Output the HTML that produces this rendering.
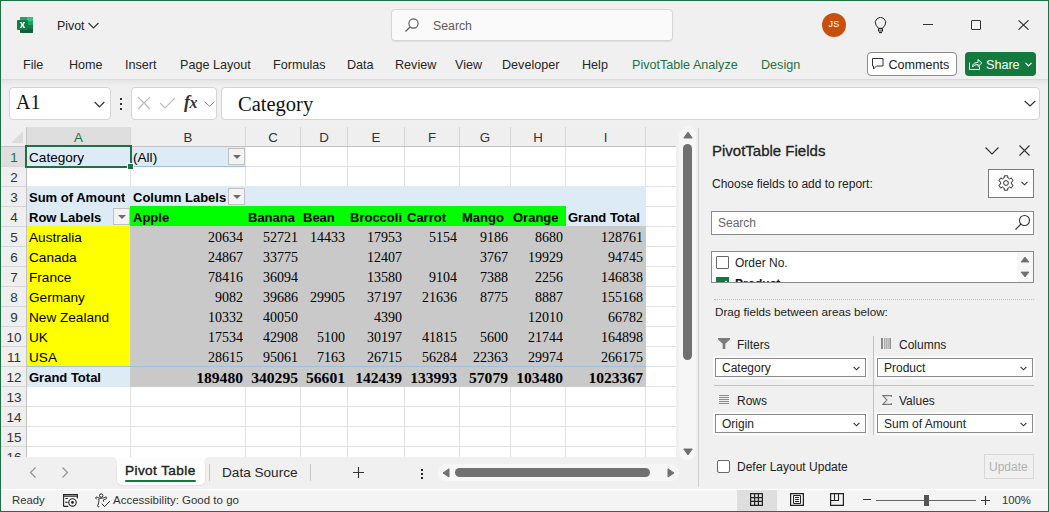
<!DOCTYPE html><html><head><meta charset="utf-8"><style>
*{margin:0;padding:0;box-sizing:border-box}
html,body{width:1049px;height:512px;overflow:hidden;background:#f0f0f0;font-family:"Liberation Sans",sans-serif;color:#222}
.a{position:absolute}
.ui{font-size:13px;color:#262626;white-space:nowrap}
.cell{position:absolute;white-space:nowrap;overflow:hidden;font-size:14px;line-height:20px}
.num{font-family:"Liberation Serif",serif;text-align:right;font-size:15px}
</style></head><body>
<div class="a" style="left:0;top:0;width:1049px;height:512px;border:1px solid #1e7145;z-index:10"></div>
<svg class="a" style="left:17px;top:17px" width="16" height="16" viewBox="0 0 16 16">
<path d="M3 1 Q3 0 4 0 H15 Q16 0 16 1 V15 Q16 16 15 16 H4 Q3 16 3 15Z" fill="#107c41"/>
<path d="M3 1 Q3 0 4 0 H15 Q16 0 16 1 V4 H3Z" fill="#21a366"/>
<path d="M10 0 H15 Q16 0 16 1 V4 H10Z" fill="#33c481"/>
<rect x="10" y="4" width="6" height="4" fill="#21a366"/>
<path d="M3 12 H16 V15 Q16 16 15 16 H4 Q3 16 3 15Z" fill="#185c37"/>
<rect x="0" y="3" width="11" height="10" rx="1" fill="#107c41"/>
<path d="M2.8 5 L4.6 5 L5.5 6.9 L6.4 5 L8.2 5 L6.5 8 L8.3 11 L6.5 11 L5.5 9.1 L4.5 11 L2.7 11 L4.5 8Z" fill="#fff"/>
</svg>
<div class="a ui" style="left:57px;top:19px;font-size:12.4px;color:#222">Pivot</div>
<svg class="a" style="left:88px;top:22px" width="11" height="7" viewBox="0 0 11 7"><path d="M0.5 1 L5.5 6 L10.5 1" fill="none" stroke="#333" stroke-width="1.1"/></svg>
<div class="a" style="left:391px;top:9px;width:282px;height:32px;background:#fafafa;border:1px solid #d6d6d6;border-radius:4px;box-shadow:0 1px 1px rgba(0,0,0,0.08)"></div>
<svg class="a" style="left:404px;top:17px" width="16" height="16" viewBox="0 0 16 16"><circle cx="9.5" cy="6.5" r="4.6" fill="none" stroke="#555" stroke-width="1.1"/><path d="M6.2 9.8 L1.5 14.5" stroke="#555" stroke-width="1.2"/></svg>
<div class="a ui" style="left:433px;top:18.7px;color:#5a5a5a;font-size:12.3px">Search</div>
<div class="a" style="left:822px;top:13px;width:24px;height:24px;border-radius:50%;background:#c94f0f;color:#fff;font-size:9px;line-height:23px;text-align:center;letter-spacing:0.3px">JS</div>
<svg class="a" style="left:873px;top:17px" width="15" height="18" viewBox="0 0 15 18"><path d="M5.5 11.3 L3 8.2 A5.2 5.2 0 1 1 12 8.2 L9.5 11.3 Z" fill="none" stroke="#222" stroke-width="1"/><rect x="5.5" y="11.8" width="4" height="2.2" fill="none" stroke="#222" stroke-width="1"/><path d="M6 15.6 H9" stroke="#222" stroke-width="1.1"/></svg>
<div class="a" style="left:923px;top:24px;width:10px;height:1px;background:#333"></div>
<div class="a" style="left:971px;top:20px;width:10px;height:10px;border:1px solid #333;border-radius:1px"></div>
<svg class="a" style="left:1018px;top:20px" width="11" height="10" viewBox="0 0 11 10"><path d="M0.5 0.3 L10.5 9.7 M10.5 0.3 L0.5 9.7" stroke="#333" stroke-width="1.1"/></svg>
<div class="a ui" style="left:23px;top:57.7px;font-size:12.6px;color:#262626">File</div>
<div class="a ui" style="left:69px;top:57.7px;font-size:12.6px;color:#262626">Home</div>
<div class="a ui" style="left:125px;top:57.7px;font-size:12.6px;color:#262626">Insert</div>
<div class="a ui" style="left:180px;top:57.7px;font-size:12.6px;color:#262626">Page Layout</div>
<div class="a ui" style="left:273px;top:57.7px;font-size:12.6px;color:#262626">Formulas</div>
<div class="a ui" style="left:347px;top:57.7px;font-size:12.6px;color:#262626">Data</div>
<div class="a ui" style="left:395px;top:57.7px;font-size:12.6px;color:#262626">Review</div>
<div class="a ui" style="left:455px;top:57.7px;font-size:12.6px;color:#262626">View</div>
<div class="a ui" style="left:502px;top:57.7px;font-size:12.6px;color:#262626">Developer</div>
<div class="a ui" style="left:582px;top:57.7px;font-size:12.6px;color:#262626">Help</div>
<div class="a ui" style="left:632px;top:57.7px;font-size:12.6px;color:#1e7145">PivotTable Analyze</div>
<div class="a ui" style="left:761px;top:57.7px;font-size:12.6px;color:#1e7145">Design</div>
<div class="a" style="left:867px;top:52px;width:90px;height:24px;border:1px solid #8a8a8a;border-radius:4px;background:#fdfdfd"></div>
<svg class="a" style="left:872px;top:58px" width="12" height="12" viewBox="0 0 12 12"><path d="M0.5 0.5 H11 V8 H4.5 L1.5 11 V8 H0.5 Z" fill="none" stroke="#333" stroke-width="1"/></svg>
<div class="a ui" style="left:888.5px;top:57.7px;font-size:12.6px;color:#222">Comments</div>
<div class="a" style="left:965px;top:52px;width:71px;height:24px;border-radius:4px;background:#117a3c"></div>
<svg class="a" style="left:969px;top:58px" width="14" height="12" viewBox="0 0 14 12"><path d="M0.5 4.5 V11.5 H10.5 V8.5" fill="none" stroke="#fff" stroke-width="1"/><path d="M3.5 9 C3.5 5.5 6 4.5 9 4.5 V1.5 L12.8 5 L9 8.5 V6.5 C6.5 6.5 4.8 7.3 3.5 9Z" fill="none" stroke="#fff" stroke-width="1"/></svg>
<div class="a ui" style="left:986px;top:57.7px;font-size:12.6px;color:#fff">Share</div>
<svg class="a" style="left:1025px;top:62px" width="7" height="5" viewBox="0 0 7 5"><path d="M0.5 0.8 L3.5 3.8 L6.5 0.8" fill="none" stroke="#fff" stroke-width="1.2"/></svg>
<div class="a" style="left:1px;top:79px;width:1048px;height:1px;background:#d9d9d9"></div>
<div class="a" style="left:1px;top:80px;width:1048px;height:6px;background:linear-gradient(#e4e4e4,#f0f0f0)"></div>
<div class="a" style="left:9px;top:87px;width:102px;height:33px;background:#fff;border:1px solid #d4d4d4;border-radius:4px"></div>
<div class="a" style="left:16px;top:91px;font-family:'Liberation Serif',serif;font-size:20px;color:#111">A1</div>
<svg class="a" style="left:94px;top:101px" width="11" height="7" viewBox="0 0 11 7"><path d="M0.7 1 L5.5 5.8 L10.3 1" fill="none" stroke="#333" stroke-width="1.2"/></svg>
<div class="a" style="left:120px;top:98px;width:2px;height:2px;background:#333"></div>
<div class="a" style="left:120px;top:103px;width:2px;height:2px;background:#333"></div>
<div class="a" style="left:120px;top:108px;width:2px;height:2px;background:#333"></div>
<div class="a" style="left:131px;top:87px;width:86px;height:33px;background:#fff;border:1px solid #d4d4d4;border-radius:4px"></div>
<svg class="a" style="left:137px;top:96px" width="14" height="14" viewBox="0 0 14 14"><path d="M1 1 L13 13 M13 1 L1 13" stroke="#bbb" stroke-width="1.1"/></svg>
<svg class="a" style="left:159px;top:97px" width="17" height="12" viewBox="0 0 17 12"><path d="M1 6 L6 11 L16 1" fill="none" stroke="#bbb" stroke-width="1.1"/></svg>
<div class="a" style="left:184px;top:92px;font-family:'Liberation Serif',serif;font-style:italic;font-weight:bold;font-size:18px;color:#333;letter-spacing:-0.5px">f<span style="font-size:16px">x</span></div>
<svg class="a" style="left:204px;top:101px" width="11" height="6" viewBox="0 0 11 6"><path d="M0.5 0.8 L5.5 5.2 L10.5 0.8" fill="none" stroke="#888" stroke-width="1"/></svg>
<div class="a" style="left:221px;top:87px;width:819px;height:33px;background:#fff;border:1px solid #d4d4d4;border-radius:4px"></div>
<div class="a" style="left:238px;top:93px;font-family:'Liberation Serif',serif;font-size:20.5px;color:#111">Category</div>
<svg class="a" style="left:1024px;top:100px" width="12" height="7" viewBox="0 0 12 7"><path d="M0.7 1 L6 6 L11.3 1" fill="none" stroke="#333" stroke-width="1.2"/></svg>
<div class="a" style="left:1px;top:127px;width:675px;height:330px;background:#fff"></div>
<div class="a" style="left:1px;top:127px;width:675px;height:19px;background:#efefef"></div>
<div class="a" style="left:1px;top:146px;width:675px;height:1px;background:#c3c3c3;z-index:2"></div>
<div class="a" style="left:1px;top:127px;width:25px;height:330px;background:#efefef"></div>
<div class="a" style="left:26px;top:127px;width:1px;height:330px;background:#c3c3c3"></div>
<div class="a" style="left:27px;top:127px;width:103px;height:19px;background:#dedede"></div>
<div class="a" style="left:1px;top:147px;width:25px;height:19px;background:#dedede"></div>
<svg class="a" style="left:11px;top:131px" width="12" height="12" viewBox="0 0 12 12"><path d="M12 0 V12 H0 Z" fill="#dcdcdc"/></svg>
<div class="a" style="left:27px;top:128px;width:103px;height:19px;line-height:20px;text-align:center;font-size:13.3px;color:#1e7145">A</div>
<div class="a" style="left:131px;top:128px;width:114px;height:19px;line-height:20px;text-align:center;font-size:13.3px;color:#333">B</div>
<div class="a" style="left:246px;top:128px;width:54px;height:19px;line-height:20px;text-align:center;font-size:13.3px;color:#333">C</div>
<div class="a" style="left:301px;top:128px;width:46px;height:19px;line-height:20px;text-align:center;font-size:13.3px;color:#333">D</div>
<div class="a" style="left:348px;top:128px;width:56px;height:19px;line-height:20px;text-align:center;font-size:13.3px;color:#333">E</div>
<div class="a" style="left:405px;top:128px;width:54px;height:19px;line-height:20px;text-align:center;font-size:13.3px;color:#333">F</div>
<div class="a" style="left:460px;top:128px;width:50px;height:19px;line-height:20px;text-align:center;font-size:13.3px;color:#333">G</div>
<div class="a" style="left:511px;top:128px;width:54px;height:19px;line-height:20px;text-align:center;font-size:13.3px;color:#333">H</div>
<div class="a" style="left:566px;top:128px;width:79px;height:19px;line-height:20px;text-align:center;font-size:13.3px;color:#333">I</div>
<div class="a" style="left:130px;top:127px;width:1px;height:19px;background:#d6d6d6"></div>
<div class="a" style="left:130px;top:147px;width:1px;height:310px;background:#e1e1e1"></div>
<div class="a" style="left:245px;top:127px;width:1px;height:19px;background:#d6d6d6"></div>
<div class="a" style="left:245px;top:147px;width:1px;height:310px;background:#e1e1e1"></div>
<div class="a" style="left:300px;top:127px;width:1px;height:19px;background:#d6d6d6"></div>
<div class="a" style="left:300px;top:147px;width:1px;height:310px;background:#e1e1e1"></div>
<div class="a" style="left:347px;top:127px;width:1px;height:19px;background:#d6d6d6"></div>
<div class="a" style="left:347px;top:147px;width:1px;height:310px;background:#e1e1e1"></div>
<div class="a" style="left:404px;top:127px;width:1px;height:19px;background:#d6d6d6"></div>
<div class="a" style="left:404px;top:147px;width:1px;height:310px;background:#e1e1e1"></div>
<div class="a" style="left:459px;top:127px;width:1px;height:19px;background:#d6d6d6"></div>
<div class="a" style="left:459px;top:147px;width:1px;height:310px;background:#e1e1e1"></div>
<div class="a" style="left:510px;top:127px;width:1px;height:19px;background:#d6d6d6"></div>
<div class="a" style="left:510px;top:147px;width:1px;height:310px;background:#e1e1e1"></div>
<div class="a" style="left:565px;top:127px;width:1px;height:19px;background:#d6d6d6"></div>
<div class="a" style="left:565px;top:147px;width:1px;height:310px;background:#e1e1e1"></div>
<div class="a" style="left:645px;top:127px;width:1px;height:19px;background:#d6d6d6"></div>
<div class="a" style="left:645px;top:147px;width:1px;height:310px;background:#e1e1e1"></div>
<div class="a" style="left:27px;top:166px;width:649px;height:1px;background:#e1e1e1"></div>
<div class="a" style="left:1px;top:166px;width:25px;height:1px;background:#d6d6d6"></div>
<div class="a" style="left:1.5px;top:148px;width:25px;height:19px;line-height:20px;text-align:center;font-size:13.5px;color:#1e7145">1</div>
<div class="a" style="left:27px;top:186px;width:649px;height:1px;background:#e1e1e1"></div>
<div class="a" style="left:1px;top:186px;width:25px;height:1px;background:#d6d6d6"></div>
<div class="a" style="left:1.5px;top:168px;width:25px;height:19px;line-height:20px;text-align:center;font-size:13.5px;color:#333">2</div>
<div class="a" style="left:27px;top:206px;width:649px;height:1px;background:#e1e1e1"></div>
<div class="a" style="left:1px;top:206px;width:25px;height:1px;background:#d6d6d6"></div>
<div class="a" style="left:1.5px;top:188px;width:25px;height:19px;line-height:20px;text-align:center;font-size:13.5px;color:#333">3</div>
<div class="a" style="left:27px;top:226px;width:649px;height:1px;background:#e1e1e1"></div>
<div class="a" style="left:1px;top:226px;width:25px;height:1px;background:#d6d6d6"></div>
<div class="a" style="left:1.5px;top:208px;width:25px;height:19px;line-height:20px;text-align:center;font-size:13.5px;color:#333">4</div>
<div class="a" style="left:27px;top:246px;width:649px;height:1px;background:#e1e1e1"></div>
<div class="a" style="left:1px;top:246px;width:25px;height:1px;background:#d6d6d6"></div>
<div class="a" style="left:1.5px;top:228px;width:25px;height:19px;line-height:20px;text-align:center;font-size:13.5px;color:#333">5</div>
<div class="a" style="left:27px;top:266px;width:649px;height:1px;background:#e1e1e1"></div>
<div class="a" style="left:1px;top:266px;width:25px;height:1px;background:#d6d6d6"></div>
<div class="a" style="left:1.5px;top:248px;width:25px;height:19px;line-height:20px;text-align:center;font-size:13.5px;color:#333">6</div>
<div class="a" style="left:27px;top:286px;width:649px;height:1px;background:#e1e1e1"></div>
<div class="a" style="left:1px;top:286px;width:25px;height:1px;background:#d6d6d6"></div>
<div class="a" style="left:1.5px;top:268px;width:25px;height:19px;line-height:20px;text-align:center;font-size:13.5px;color:#333">7</div>
<div class="a" style="left:27px;top:306px;width:649px;height:1px;background:#e1e1e1"></div>
<div class="a" style="left:1px;top:306px;width:25px;height:1px;background:#d6d6d6"></div>
<div class="a" style="left:1.5px;top:288px;width:25px;height:19px;line-height:20px;text-align:center;font-size:13.5px;color:#333">8</div>
<div class="a" style="left:27px;top:326px;width:649px;height:1px;background:#e1e1e1"></div>
<div class="a" style="left:1px;top:326px;width:25px;height:1px;background:#d6d6d6"></div>
<div class="a" style="left:1.5px;top:308px;width:25px;height:19px;line-height:20px;text-align:center;font-size:13.5px;color:#333">9</div>
<div class="a" style="left:27px;top:346px;width:649px;height:1px;background:#e1e1e1"></div>
<div class="a" style="left:1px;top:346px;width:25px;height:1px;background:#d6d6d6"></div>
<div class="a" style="left:1.5px;top:328px;width:25px;height:19px;line-height:20px;text-align:center;font-size:13.5px;color:#333">10</div>
<div class="a" style="left:27px;top:366px;width:649px;height:1px;background:#e1e1e1"></div>
<div class="a" style="left:1px;top:366px;width:25px;height:1px;background:#d6d6d6"></div>
<div class="a" style="left:1.5px;top:348px;width:25px;height:19px;line-height:20px;text-align:center;font-size:13.5px;color:#333">11</div>
<div class="a" style="left:27px;top:386px;width:649px;height:1px;background:#e1e1e1"></div>
<div class="a" style="left:1px;top:386px;width:25px;height:1px;background:#d6d6d6"></div>
<div class="a" style="left:1.5px;top:368px;width:25px;height:19px;line-height:20px;text-align:center;font-size:13.5px;color:#333">12</div>
<div class="a" style="left:27px;top:406px;width:649px;height:1px;background:#e1e1e1"></div>
<div class="a" style="left:1px;top:406px;width:25px;height:1px;background:#d6d6d6"></div>
<div class="a" style="left:1.5px;top:388px;width:25px;height:19px;line-height:20px;text-align:center;font-size:13.5px;color:#333">13</div>
<div class="a" style="left:27px;top:426px;width:649px;height:1px;background:#e1e1e1"></div>
<div class="a" style="left:1px;top:426px;width:25px;height:1px;background:#d6d6d6"></div>
<div class="a" style="left:1.5px;top:408px;width:25px;height:19px;line-height:20px;text-align:center;font-size:13.5px;color:#333">14</div>
<div class="a" style="left:27px;top:446px;width:649px;height:1px;background:#e1e1e1"></div>
<div class="a" style="left:1px;top:446px;width:25px;height:1px;background:#d6d6d6"></div>
<div class="a" style="left:1.5px;top:428px;width:25px;height:19px;line-height:20px;text-align:center;font-size:13.5px;color:#333">15</div>
<div class="a" style="left:1.5px;top:448px;width:25px;height:19px;line-height:20px;text-align:center;font-size:13.5px;color:#333">16</div>
<div class="a" style="left:130px;top:146px;width:116px;height:21px;background:#ddebf7"></div>
<div class="a" style="left:27px;top:146px;width:104px;height:21px;background:#ddebf7"></div>
<div class="a" style="left:130px;top:166px;width:116px;height:1px;background:#9bc2e6"></div>
<div class="a" style="left:27px;top:186px;width:619px;height:21px;background:#ddebf7"></div>
<div class="a" style="left:27px;top:206px;width:104px;height:21px;background:#ddebf7"></div>
<div class="a" style="left:565px;top:206px;width:81px;height:21px;background:#ddebf7"></div>
<div class="a" style="left:130px;top:206px;width:436px;height:21px;background:#00ff00"></div>
<div class="a" style="left:27px;top:226px;width:619px;height:1px;background:#9bc2e6"></div>
<div class="a" style="left:27px;top:226px;width:104px;height:141px;background:#ffff00"></div>
<div class="a" style="left:27px;top:366px;width:104px;height:21px;background:#ddebf7"></div>
<div class="a" style="left:130px;top:226px;width:516px;height:161px;background:#c9c9c9"></div>
<div class="a" style="left:27px;top:366px;width:619px;height:1px;background:#9bc2e6"></div>
<div class="a" style="left:25px;top:145px;width:107px;height:23px;border:2px solid #1e7145;z-index:3"></div>
<div class="a" style="left:127px;top:163px;width:7px;height:7px;background:#1e7145;border:1px solid #fff;z-index:3"></div>
<div class="a" style="left:228px;top:148px;width:17px;height:17px;background:#f3f3f3;border:1px solid #c0c0c0"></div>
<svg class="a" style="left:233px;top:155px" width="8" height="5" viewBox="0 0 8 5"><path d="M0 0 H8 L4 4Z" fill="#6a6a6a"/></svg>
<div class="a" style="left:228px;top:188px;width:17px;height:17px;background:#f3f3f3;border:1px solid #c0c0c0"></div>
<svg class="a" style="left:233px;top:195px" width="8" height="5" viewBox="0 0 8 5"><path d="M0 0 H8 L4 4Z" fill="#6a6a6a"/></svg>
<div class="a" style="left:113px;top:208px;width:17px;height:17px;background:#f3f3f3;border:1px solid #c0c0c0"></div>
<svg class="a" style="left:118px;top:215px" width="8" height="5" viewBox="0 0 8 5"><path d="M0 0 H8 L4 4Z" fill="#6a6a6a"/></svg>
<div class="cell" style="left:29px;top:148px;font-family:'Liberation Sans',sans-serif;font-size:13.6px;color:#000;">Category</div>
<div class="cell" style="left:133px;top:148px;font-family:'Liberation Sans',sans-serif;font-size:13.6px;color:#000;">(All)</div>
<div class="cell" style="left:29px;top:188px;font-family:'Liberation Sans',sans-serif;font-size:13px;color:#000;font-weight:bold;">Sum of Amount</div>
<div class="cell" style="left:133px;top:188px;font-family:'Liberation Sans',sans-serif;font-size:13px;color:#000;font-weight:bold;">Column Labels</div>
<div class="cell" style="left:29px;top:208px;font-family:'Liberation Sans',sans-serif;font-size:13px;color:#000;font-weight:bold;">Row Labels</div>
<div class="cell" style="left:133px;top:208px;font-family:'Liberation Sans',sans-serif;font-size:13px;color:#000;font-weight:bold;">Apple</div>
<div class="cell" style="left:248px;top:208px;font-family:'Liberation Sans',sans-serif;font-size:13px;color:#000;font-weight:bold;">Banana</div>
<div class="cell" style="left:303px;top:208px;font-family:'Liberation Sans',sans-serif;font-size:13px;color:#000;font-weight:bold;">Bean</div>
<div class="cell" style="left:350px;top:208px;font-family:'Liberation Sans',sans-serif;font-size:13px;color:#000;font-weight:bold;">Broccoli</div>
<div class="cell" style="left:407px;top:208px;font-family:'Liberation Sans',sans-serif;font-size:13px;color:#000;font-weight:bold;">Carrot</div>
<div class="cell" style="left:462px;top:208px;font-family:'Liberation Sans',sans-serif;font-size:13px;color:#000;font-weight:bold;">Mango</div>
<div class="cell" style="left:513px;top:208px;font-family:'Liberation Sans',sans-serif;font-size:13px;color:#000;font-weight:bold;">Orange</div>
<div class="cell" style="left:568px;top:208px;font-family:'Liberation Sans',sans-serif;font-size:13px;color:#000;font-weight:bold;">Grand Total</div>
<div class="cell" style="left:29px;top:228px;font-family:'Liberation Sans',sans-serif;font-size:13.6px;color:#000;">Australia</div>
<div class="cell" style="left:131px;width:112px;text-align:right;top:228px;font-family:'Liberation Serif',serif;font-size:14px;color:#000;">20634</div>
<div class="cell" style="left:246px;width:52px;text-align:right;top:228px;font-family:'Liberation Serif',serif;font-size:14px;color:#000;">52721</div>
<div class="cell" style="left:301px;width:44px;text-align:right;top:228px;font-family:'Liberation Serif',serif;font-size:14px;color:#000;">14433</div>
<div class="cell" style="left:348px;width:54px;text-align:right;top:228px;font-family:'Liberation Serif',serif;font-size:14px;color:#000;">17953</div>
<div class="cell" style="left:405px;width:52px;text-align:right;top:228px;font-family:'Liberation Serif',serif;font-size:14px;color:#000;">5154</div>
<div class="cell" style="left:460px;width:48px;text-align:right;top:228px;font-family:'Liberation Serif',serif;font-size:14px;color:#000;">9186</div>
<div class="cell" style="left:511px;width:52px;text-align:right;top:228px;font-family:'Liberation Serif',serif;font-size:14px;color:#000;">8680</div>
<div class="cell" style="left:566px;width:77px;text-align:right;top:228px;font-family:'Liberation Serif',serif;font-size:14px;color:#000;">128761</div>
<div class="cell" style="left:29px;top:248px;font-family:'Liberation Sans',sans-serif;font-size:13.6px;color:#000;">Canada</div>
<div class="cell" style="left:131px;width:112px;text-align:right;top:248px;font-family:'Liberation Serif',serif;font-size:14px;color:#000;">24867</div>
<div class="cell" style="left:246px;width:52px;text-align:right;top:248px;font-family:'Liberation Serif',serif;font-size:14px;color:#000;">33775</div>
<div class="cell" style="left:348px;width:54px;text-align:right;top:248px;font-family:'Liberation Serif',serif;font-size:14px;color:#000;">12407</div>
<div class="cell" style="left:460px;width:48px;text-align:right;top:248px;font-family:'Liberation Serif',serif;font-size:14px;color:#000;">3767</div>
<div class="cell" style="left:511px;width:52px;text-align:right;top:248px;font-family:'Liberation Serif',serif;font-size:14px;color:#000;">19929</div>
<div class="cell" style="left:566px;width:77px;text-align:right;top:248px;font-family:'Liberation Serif',serif;font-size:14px;color:#000;">94745</div>
<div class="cell" style="left:29px;top:268px;font-family:'Liberation Sans',sans-serif;font-size:13.6px;color:#000;">France</div>
<div class="cell" style="left:131px;width:112px;text-align:right;top:268px;font-family:'Liberation Serif',serif;font-size:14px;color:#000;">78416</div>
<div class="cell" style="left:246px;width:52px;text-align:right;top:268px;font-family:'Liberation Serif',serif;font-size:14px;color:#000;">36094</div>
<div class="cell" style="left:348px;width:54px;text-align:right;top:268px;font-family:'Liberation Serif',serif;font-size:14px;color:#000;">13580</div>
<div class="cell" style="left:405px;width:52px;text-align:right;top:268px;font-family:'Liberation Serif',serif;font-size:14px;color:#000;">9104</div>
<div class="cell" style="left:460px;width:48px;text-align:right;top:268px;font-family:'Liberation Serif',serif;font-size:14px;color:#000;">7388</div>
<div class="cell" style="left:511px;width:52px;text-align:right;top:268px;font-family:'Liberation Serif',serif;font-size:14px;color:#000;">2256</div>
<div class="cell" style="left:566px;width:77px;text-align:right;top:268px;font-family:'Liberation Serif',serif;font-size:14px;color:#000;">146838</div>
<div class="cell" style="left:29px;top:288px;font-family:'Liberation Sans',sans-serif;font-size:13.6px;color:#000;">Germany</div>
<div class="cell" style="left:131px;width:112px;text-align:right;top:288px;font-family:'Liberation Serif',serif;font-size:14px;color:#000;">9082</div>
<div class="cell" style="left:246px;width:52px;text-align:right;top:288px;font-family:'Liberation Serif',serif;font-size:14px;color:#000;">39686</div>
<div class="cell" style="left:301px;width:44px;text-align:right;top:288px;font-family:'Liberation Serif',serif;font-size:14px;color:#000;">29905</div>
<div class="cell" style="left:348px;width:54px;text-align:right;top:288px;font-family:'Liberation Serif',serif;font-size:14px;color:#000;">37197</div>
<div class="cell" style="left:405px;width:52px;text-align:right;top:288px;font-family:'Liberation Serif',serif;font-size:14px;color:#000;">21636</div>
<div class="cell" style="left:460px;width:48px;text-align:right;top:288px;font-family:'Liberation Serif',serif;font-size:14px;color:#000;">8775</div>
<div class="cell" style="left:511px;width:52px;text-align:right;top:288px;font-family:'Liberation Serif',serif;font-size:14px;color:#000;">8887</div>
<div class="cell" style="left:566px;width:77px;text-align:right;top:288px;font-family:'Liberation Serif',serif;font-size:14px;color:#000;">155168</div>
<div class="cell" style="left:29px;top:308px;font-family:'Liberation Sans',sans-serif;font-size:13.6px;color:#000;">New Zealand</div>
<div class="cell" style="left:131px;width:112px;text-align:right;top:308px;font-family:'Liberation Serif',serif;font-size:14px;color:#000;">10332</div>
<div class="cell" style="left:246px;width:52px;text-align:right;top:308px;font-family:'Liberation Serif',serif;font-size:14px;color:#000;">40050</div>
<div class="cell" style="left:348px;width:54px;text-align:right;top:308px;font-family:'Liberation Serif',serif;font-size:14px;color:#000;">4390</div>
<div class="cell" style="left:511px;width:52px;text-align:right;top:308px;font-family:'Liberation Serif',serif;font-size:14px;color:#000;">12010</div>
<div class="cell" style="left:566px;width:77px;text-align:right;top:308px;font-family:'Liberation Serif',serif;font-size:14px;color:#000;">66782</div>
<div class="cell" style="left:29px;top:328px;font-family:'Liberation Sans',sans-serif;font-size:13.6px;color:#000;">UK</div>
<div class="cell" style="left:131px;width:112px;text-align:right;top:328px;font-family:'Liberation Serif',serif;font-size:14px;color:#000;">17534</div>
<div class="cell" style="left:246px;width:52px;text-align:right;top:328px;font-family:'Liberation Serif',serif;font-size:14px;color:#000;">42908</div>
<div class="cell" style="left:301px;width:44px;text-align:right;top:328px;font-family:'Liberation Serif',serif;font-size:14px;color:#000;">5100</div>
<div class="cell" style="left:348px;width:54px;text-align:right;top:328px;font-family:'Liberation Serif',serif;font-size:14px;color:#000;">30197</div>
<div class="cell" style="left:405px;width:52px;text-align:right;top:328px;font-family:'Liberation Serif',serif;font-size:14px;color:#000;">41815</div>
<div class="cell" style="left:460px;width:48px;text-align:right;top:328px;font-family:'Liberation Serif',serif;font-size:14px;color:#000;">5600</div>
<div class="cell" style="left:511px;width:52px;text-align:right;top:328px;font-family:'Liberation Serif',serif;font-size:14px;color:#000;">21744</div>
<div class="cell" style="left:566px;width:77px;text-align:right;top:328px;font-family:'Liberation Serif',serif;font-size:14px;color:#000;">164898</div>
<div class="cell" style="left:29px;top:348px;font-family:'Liberation Sans',sans-serif;font-size:13.6px;color:#000;">USA</div>
<div class="cell" style="left:131px;width:112px;text-align:right;top:348px;font-family:'Liberation Serif',serif;font-size:14px;color:#000;">28615</div>
<div class="cell" style="left:246px;width:52px;text-align:right;top:348px;font-family:'Liberation Serif',serif;font-size:14px;color:#000;">95061</div>
<div class="cell" style="left:301px;width:44px;text-align:right;top:348px;font-family:'Liberation Serif',serif;font-size:14px;color:#000;">7163</div>
<div class="cell" style="left:348px;width:54px;text-align:right;top:348px;font-family:'Liberation Serif',serif;font-size:14px;color:#000;">26715</div>
<div class="cell" style="left:405px;width:52px;text-align:right;top:348px;font-family:'Liberation Serif',serif;font-size:14px;color:#000;">56284</div>
<div class="cell" style="left:460px;width:48px;text-align:right;top:348px;font-family:'Liberation Serif',serif;font-size:14px;color:#000;">22363</div>
<div class="cell" style="left:511px;width:52px;text-align:right;top:348px;font-family:'Liberation Serif',serif;font-size:14px;color:#000;">29974</div>
<div class="cell" style="left:566px;width:77px;text-align:right;top:348px;font-family:'Liberation Serif',serif;font-size:14px;color:#000;">266175</div>
<div class="cell" style="left:29px;top:368px;font-family:'Liberation Sans',sans-serif;font-size:13px;color:#000;font-weight:bold;">Grand Total</div>
<div class="cell" style="left:131px;width:112px;text-align:right;top:368px;font-family:'Liberation Serif',serif;font-size:15.6px;color:#000;font-weight:bold;">189480</div>
<div class="cell" style="left:246px;width:52px;text-align:right;top:368px;font-family:'Liberation Serif',serif;font-size:15.6px;color:#000;font-weight:bold;">340295</div>
<div class="cell" style="left:301px;width:44px;text-align:right;top:368px;font-family:'Liberation Serif',serif;font-size:15.6px;color:#000;font-weight:bold;">56601</div>
<div class="cell" style="left:348px;width:54px;text-align:right;top:368px;font-family:'Liberation Serif',serif;font-size:15.6px;color:#000;font-weight:bold;">142439</div>
<div class="cell" style="left:405px;width:52px;text-align:right;top:368px;font-family:'Liberation Serif',serif;font-size:15.6px;color:#000;font-weight:bold;">133993</div>
<div class="cell" style="left:460px;width:48px;text-align:right;top:368px;font-family:'Liberation Serif',serif;font-size:15.6px;color:#000;font-weight:bold;">57079</div>
<div class="cell" style="left:511px;width:52px;text-align:right;top:368px;font-family:'Liberation Serif',serif;font-size:15.6px;color:#000;font-weight:bold;">103480</div>
<div class="cell" style="left:566px;width:77px;text-align:right;top:368px;font-family:'Liberation Serif',serif;font-size:15.6px;color:#000;font-weight:bold;">1023367</div>
<div class="a" style="left:676px;top:127px;width:22px;height:360px;background:#f0f0f0"></div>
<div class="a" style="left:679px;top:127px;width:17px;height:333px;background:#f6f6f6;border-radius:8px"></div>
<svg class="a" style="left:683px;top:131px" width="10" height="8" viewBox="0 0 10 8"><path d="M5 1 L9.2 7 H0.8Z" fill="#707070" stroke="#707070" stroke-width="1" stroke-linejoin="round"/></svg>
<div class="a" style="left:683px;top:144px;width:9px;height:216px;border-radius:4.5px;background:#707070"></div>
<svg class="a" style="left:683px;top:448px" width="10" height="8" viewBox="0 0 10 8"><path d="M0.8 1 H9.2 L5 7Z" fill="#707070" stroke="#707070" stroke-width="1" stroke-linejoin="round"/></svg>
<div class="a" style="left:1px;top:457px;width:675px;height:32px;background:#f0f0f0"></div>
<div class="a" style="left:116px;top:457px;width:90px;height:29px;background:#fdfdfd;border:1px solid #e4e4e4;border-top:none;border-radius:0 0 6px 6px"></div>
<div class="a" style="left:110px;top:457px;width:7px;height:7px;background:#fff"></div>
<div class="a" style="left:109px;top:457px;width:8px;height:8px;background:#f0f0f0;border-radius:0 5px 0 0"></div>
<div class="a" style="left:204px;top:457px;width:7px;height:7px;background:#fff"></div>
<div class="a" style="left:204px;top:457px;width:8px;height:8px;background:#f0f0f0;border-radius:5px 0 0 0"></div>
<svg class="a" style="left:29px;top:467px" width="8" height="11" viewBox="0 0 8 11"><path d="M6.5 0.5 L1.5 5.5 L6.5 10.5" fill="none" stroke="#949494" stroke-width="1.2"/></svg>
<svg class="a" style="left:61px;top:467px" width="8" height="11" viewBox="0 0 8 11"><path d="M1.5 0.5 L6.5 5.5 L1.5 10.5" fill="none" stroke="#949494" stroke-width="1.2"/></svg>
<div class="a ui" style="left:125px;top:462.7px;font-size:13.6px;letter-spacing:0.4px;-webkit-text-stroke:0.4px #222;color:#222">Pivot Table</div>
<div class="a" style="left:125px;top:480px;width:71px;height:2px;background:#117a3c;border-radius:1px"></div>
<div class="a" style="left:209px;top:464px;width:1px;height:17px;background:#c8c8c8"></div>
<div class="a ui" style="left:222px;top:465px;font-size:13.6px;color:#262626">Data Source</div>
<div class="a" style="left:310px;top:464px;width:1px;height:17px;background:#c8c8c8"></div>
<svg class="a" style="left:353px;top:467px" width="11" height="11" viewBox="0 0 11 11"><path d="M5.5 0 V11 M0 5.5 H11" stroke="#333" stroke-width="1.1"/></svg>
<div class="a" style="left:421px;top:469px;width:2px;height:2px;background:#222"></div>
<div class="a" style="left:421px;top:473px;width:2px;height:2px;background:#222"></div>
<div class="a" style="left:421px;top:477px;width:2px;height:2px;background:#222"></div>
<div class="a" style="left:438px;top:464px;width:241px;height:17px;background:#f6f6f6;border-radius:8px"></div>
<svg class="a" style="left:442px;top:468px" width="8" height="10" viewBox="0 0 8 10"><path d="M7 0.8 V9 L1 5Z" fill="#707070" stroke="#707070" stroke-width="1" stroke-linejoin="round"/></svg>
<div class="a" style="left:455px;top:468px;width:195px;height:9px;background:#707070;border-radius:4.5px"></div>
<svg class="a" style="left:667px;top:468px" width="8" height="10" viewBox="0 0 8 10"><path d="M1 0.8 V9 L7 5Z" fill="#707070" stroke="#707070" stroke-width="1" stroke-linejoin="round"/></svg>
<div class="a" style="left:1px;top:489px;width:1048px;height:23px;background:#f4f4f4"></div>
<div class="a" style="left:1px;top:489px;width:1048px;height:1px;background:#fff"></div>
<div class="a ui" style="left:12px;top:494px;font-size:11.3px;color:#333">Ready</div>
<svg class="a" style="left:63px;top:494px" width="15" height="13" viewBox="0 0 15 13"><path d="M0.6 12.4 V0.6 H14.4 V4.6 M0.6 2.3 H14.4 M0.6 12.4 H5.2 M2.4 4.5 H4.8 M2.4 8.4 H4.6" fill="none" stroke="#222" stroke-width="1.1"/><circle cx="9.5" cy="8.4" r="3.7" fill="#f4f4f4" stroke="#222" stroke-width="1.1"/><circle cx="9.5" cy="8.4" r="1.4" fill="#222"/></svg>
<svg class="a" style="left:95px;top:493px" width="16" height="15" viewBox="0 0 16 15"><circle cx="6.2" cy="2.6" r="1.7" fill="none" stroke="#222" stroke-width="1"/><path d="M1.6 6 C0.2 5.6 0.4 3.8 1.8 4.1 C3 4.4 4 5.3 6.2 5.3 C8.4 5.3 9.4 4.4 10.6 4.1 C12 3.8 12.2 5.6 10.8 6 C10 6.2 9 6.4 8.6 6.8 V8.6 M3.8 5.7 C4.2 8 3.6 10.5 2.7 12.6 C2.4 13.4 3.4 14.2 4.3 13.6" fill="none" stroke="#222" stroke-width="1"/><path d="M6.8 10.6 L9.6 13.6 L14.8 8.2" fill="none" stroke="#222" stroke-width="1"/></svg>
<div class="a ui" style="left:113px;top:494px;font-size:11.5px;color:#333">Accessibility: Good to go</div>
<div class="a" style="left:737px;top:490px;width:40px;height:21px;background:#dedede"></div>
<svg class="a" style="left:750px;top:493px" width="13" height="13" viewBox="0 0 13 13"><path d="M0.6 0.6 H12.4 V12.4 H0.6Z M0.6 4.6 H12.4 M0.6 8.4 H12.4 M4.6 0.6 V12.4 M8.4 0.6 V12.4" fill="none" stroke="#222" stroke-width="1.2"/></svg>
<svg class="a" style="left:790px;top:493px" width="14" height="13" viewBox="0 0 14 13"><path d="M0.6 0.6 H13.4 V12.4 H0.6Z" fill="none" stroke="#222" stroke-width="1.2"/><path d="M3.5 2.5 H10.5 V10.5 H3.5Z" fill="none" stroke="#222" stroke-width="1"/><path d="M5 4.5 H9 M5 6.5 H9 M5 8.5 H9" stroke="#222" stroke-width="1"/></svg>
<svg class="a" style="left:830px;top:493px" width="14" height="13" viewBox="0 0 14 13"><path d="M0.6 0.6 H13.4 V12.4 H0.6Z" fill="none" stroke="#222" stroke-width="1.2"/><path d="M0.6 7.5 H8.5 V0.6 M4.5 0.6 V7.5" fill="none" stroke="#222" stroke-width="1.1"/></svg>
<div class="a" style="left:863px;top:499px;width:8px;height:1px;background:#333"></div>
<div class="a" style="left:876px;top:500px;width:100px;height:1px;background:#666"></div>
<div class="a" style="left:924px;top:495px;width:5px;height:11px;background:#555"></div>
<svg class="a" style="left:981px;top:496px" width="9" height="9" viewBox="0 0 9 9"><path d="M4.5 0 V9 M0 4.5 H9" stroke="#333" stroke-width="1.1"/></svg>
<div class="a ui" style="left:1002px;top:494px;font-size:11.3px;color:#333">100%</div>
<div class="a" style="left:698px;top:128px;width:1px;height:359px;background:#d0d0d0"></div>
<div class="a ui" style="left:712px;top:142px;font-size:15px;color:#222;-webkit-text-stroke:0.3px #222">PivotTable Fields</div>
<svg class="a" style="left:985px;top:147px" width="14" height="8" viewBox="0 0 14 8"><path d="M0.5 0.5 L7 7 L13.5 0.5" fill="none" stroke="#333" stroke-width="1.1"/></svg>
<svg class="a" style="left:1019px;top:145px" width="11" height="11" viewBox="0 0 11 11"><path d="M0.5 0.5 L10.5 10.5 M10.5 0.5 L0.5 10.5" stroke="#333" stroke-width="1.1"/></svg>
<div class="a ui" style="left:712px;top:177px;font-size:12px;color:#222">Choose fields to add to report:</div>
<div class="a" style="left:988px;top:169px;width:46px;height:29px;border:1px solid #7a7a7a;background:#fdfdfd"></div>
<svg class="a" style="left:998px;top:175px" width="16" height="16" viewBox="0 0 16 16"><path d="M5.30 3.32 L6.15 2.93 L6.34 0.79 L9.66 0.79 L9.85 2.93 L10.70 3.32 L11.47 3.86 L13.41 2.95 L15.08 5.84 L13.32 7.06 L13.40 8.00 L13.32 8.94 L15.08 10.16 L13.41 13.05 L11.47 12.14 L10.70 12.68 L9.85 13.07 L9.66 15.21 L6.34 15.21 L6.15 13.07 L5.30 12.68 L4.53 12.14 L2.59 13.05 L0.92 10.16 L2.68 8.94 L2.60 8.00 L2.68 7.06 L0.92 5.84 L2.59 2.95 L4.53 3.86Z" fill="none" stroke="#333" stroke-width="1" stroke-linejoin="round"/><circle cx="8" cy="8" r="2.4" fill="none" stroke="#333" stroke-width="1"/></svg>
<svg class="a" style="left:1021px;top:181px" width="7" height="5" viewBox="0 0 7 5"><path d="M0.5 0.8 L3.5 3.8 L6.5 0.8" fill="none" stroke="#333" stroke-width="1.1"/></svg>
<div class="a" style="left:711px;top:211px;width:323px;height:24px;border:1px solid #8a8a8a;background:#fff"></div>
<div class="a ui" style="left:718px;top:216px;font-size:12px;color:#666">Search</div>
<svg class="a" style="left:1014px;top:214px" width="17" height="17" viewBox="0 0 17 17"><circle cx="10.5" cy="6.5" r="5" fill="none" stroke="#333" stroke-width="1.1"/><path d="M7 10 L1.5 15.5" stroke="#333" stroke-width="1.2"/></svg>
<div class="a" style="left:711px;top:251px;width:323px;height:32px;border:1px solid #8a8a8a;background:#fff;overflow:hidden"><div class="a" style="left:4px;top:4px;width:13px;height:13px;border:1px solid #666;background:#fff;border-radius:1px"></div><div class="a ui" style="left:23px;top:4px;font-size:12px;color:#222">Order No.</div><div class="a" style="left:4px;top:25px;width:13px;height:13px;background:#117a3c"></div><svg class="a" style="left:6px;top:27px" width="10" height="10" viewBox="0 0 10 10"><path d="M1.5 5 L4 7.5 L8.5 2" fill="none" stroke="#fff" stroke-width="1.4"/></svg><div class="a ui" style="left:23px;top:25px;font-size:12px;color:#111;font-weight:bold">Product</div><div class="a" style="left:305px;top:0;width:17px;height:30px;background:#f7f7f7"></div></div>
<svg class="a" style="left:1020px;top:256px" width="10" height="7" viewBox="0 0 10 7"><path d="M5 1 L9 6 H1Z" fill="#707070" stroke="#707070" stroke-width="0.8" stroke-linejoin="round"/></svg>
<svg class="a" style="left:1020px;top:271px" width="10" height="7" viewBox="0 0 10 7"><path d="M1 1 H9 L5 6Z" fill="#707070" stroke="#707070" stroke-width="0.8" stroke-linejoin="round"/></svg>
<div class="a" style="left:714px;top:299px;width:320px;height:1px;border-top:1px dotted #bdbdbd"></div>
<div class="a ui" style="left:715px;top:305px;font-size:11.7px;color:#222">Drag fields between areas below:</div>
<div class="a" style="left:873px;top:336px;width:1px;height:99px;background:#c2c2c2"></div>
<div class="a" style="left:714px;top:385px;width:320px;height:1px;background:#c2c2c2"></div>
<svg class="a" style="left:718px;top:338px" width="12" height="11" viewBox="0 0 12 11"><path d="M0 0 H12 V1.5 L7.3 5.8 V11 L4.7 11 V5.8 L0 1.5Z" fill="#7a7a7a"/></svg>
<div class="a ui" style="left:737px;top:338px;font-size:12px;color:#222">Filters</div>
<svg class="a" style="left:881px;top:338px" width="10" height="11" viewBox="0 0 10 11"><path d="M1 0 V11 M3.8 0 V11 M5.9 0 V11 M8 0 V11 M9.6 0 V11" stroke="#888" stroke-width="1"/><rect x="0" y="0" width="2" height="11" fill="#888"/></svg>
<div class="a ui" style="left:899px;top:338px;font-size:12px;color:#222">Columns</div>
<svg class="a" style="left:719px;top:395px" width="10" height="10" viewBox="0 0 10 10"><path d="M0 0.5 H10 M0 2.5 H10 M0 4.5 H10 M0 6.5 H10 M0 8.5 H10" stroke="#8a8a8a" stroke-width="1"/></svg>
<div class="a ui" style="left:737px;top:394px;font-size:12px;color:#222">Rows</div>
<svg class="a" style="left:882px;top:395px" width="10" height="10" viewBox="0 0 10 10"><path d="M9.5 1.8 V0.6 H0.8 L5 5 L0.8 9.4 H9.5 V8.2" fill="none" stroke="#777" stroke-width="1.1"/></svg>
<div class="a ui" style="left:899px;top:394px;font-size:12px;color:#222">Values</div>
<div class="a" style="left:715px;top:358px;width:151px;height:19px;border:1px solid #8a8a8a;background:#fff;outline:2px solid #fafafa"></div>
<div class="a ui" style="left:722px;top:361px;font-size:12px;color:#222">Category</div>
<svg class="a" style="left:853px;top:366px" width="7" height="5" viewBox="0 0 7 5"><path d="M0.6 0.8 L3.5 3.8 L6.4 0.8" fill="none" stroke="#333" stroke-width="1.1"/></svg>
<div class="a" style="left:877px;top:358px;width:156px;height:19px;border:1px solid #8a8a8a;background:#fff;outline:2px solid #fafafa"></div>
<div class="a ui" style="left:884px;top:361px;font-size:12px;color:#222">Product</div>
<svg class="a" style="left:1020px;top:366px" width="7" height="5" viewBox="0 0 7 5"><path d="M0.6 0.8 L3.5 3.8 L6.4 0.8" fill="none" stroke="#333" stroke-width="1.1"/></svg>
<div class="a" style="left:715px;top:414px;width:151px;height:19px;border:1px solid #8a8a8a;background:#fff;outline:2px solid #fafafa"></div>
<div class="a ui" style="left:722px;top:417px;font-size:12px;color:#222">Origin</div>
<svg class="a" style="left:853px;top:422px" width="7" height="5" viewBox="0 0 7 5"><path d="M0.6 0.8 L3.5 3.8 L6.4 0.8" fill="none" stroke="#333" stroke-width="1.1"/></svg>
<div class="a" style="left:877px;top:414px;width:156px;height:19px;border:1px solid #8a8a8a;background:#fff;outline:2px solid #fafafa"></div>
<div class="a ui" style="left:884px;top:417px;font-size:12px;color:#222">Sum of Amount</div>
<svg class="a" style="left:1020px;top:422px" width="7" height="5" viewBox="0 0 7 5"><path d="M0.6 0.8 L3.5 3.8 L6.4 0.8" fill="none" stroke="#333" stroke-width="1.1"/></svg>
<div class="a" style="left:717px;top:460px;width:13px;height:13px;border:1px solid #666;background:#fff;border-radius:2px"></div>
<div class="a ui" style="left:737px;top:460px;font-size:12px;color:#222">Defer Layout Update</div>
<div class="a" style="left:984px;top:454px;width:50px;height:25px;border:1px solid #d8d8d8;background:#f0f0f0"></div>
<div class="a ui" style="left:989px;top:460px;font-size:12px;color:#b0b0b0">Update</div>
</body></html>
